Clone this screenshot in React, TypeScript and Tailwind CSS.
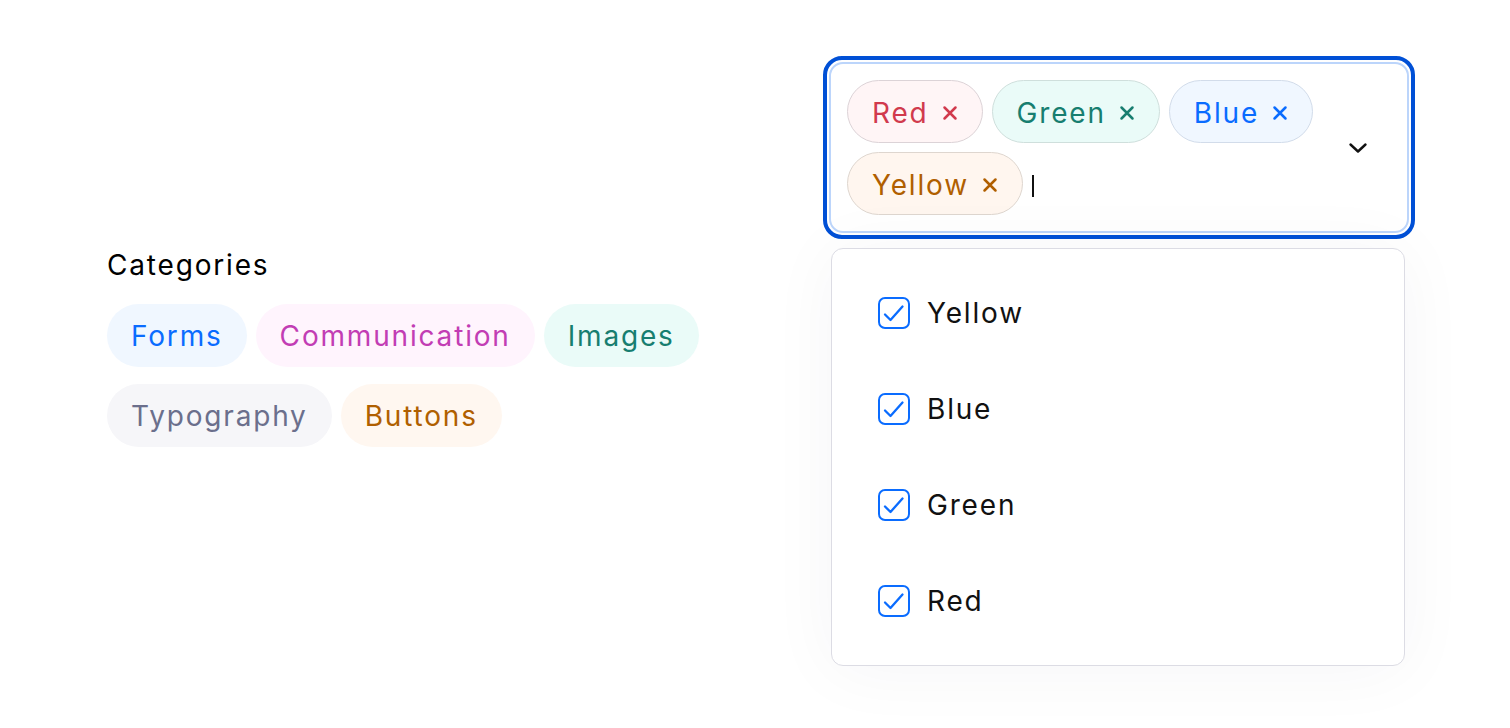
import React from "react";

const CATEGORIES: { label: string; cls: string }[] = [
  { label: "Forms", cls: "bg-[#f0f7ff] text-[#0a6cff]" },
  { label: "Communication", cls: "bg-[#fff4fd] text-[#c23db4]" },
  { label: "Images", cls: "bg-[#eafbf8] text-[#177e70]" },
  { label: "Typography", cls: "bg-[#f6f6f9] text-[#6b6f8c]" },
  { label: "Buttons", cls: "bg-[#fff7f0] text-[#b05f00]" },
];

const SELECTED: { label: string; cls: string }[] = [
  { label: "Red", cls: "bg-[#fff5f6] text-[#d13a4d] border-[#dcd3d7]" },
  { label: "Green", cls: "bg-[#eafbf8] text-[#177e70] border-[#cfdfdc]" },
  { label: "Blue", cls: "bg-[#f0f7ff] text-[#0a6cff] border-[#d2dcea]" },
  { label: "Yellow", cls: "bg-[#fff6ef] text-[#b05f00] border-[#ded6cf]" },
];

const OPTIONS = ["Yellow", "Blue", "Green", "Red"];

function XIcon() {
  return (
    <svg width="16" height="16" viewBox="0 0 16 16" fill="none" stroke="currentColor" strokeWidth="2.5" strokeLinecap="round" aria-hidden>
      <path d="M2.5 2.5l11 11M13.5 2.5l-11 11" />
    </svg>
  );
}

function Chevron() {
  return (
    <svg width="20" height="20" viewBox="0 0 20 20" fill="none" stroke="#111" strokeWidth="2.4" strokeLinecap="round" strokeLinejoin="round" aria-hidden>
      <path d="M2.5 6.5L10 13.5l7.5-7" />
    </svg>
  );
}

function Checkbox() {
  return (
    <span className="flex h-8 w-8 shrink-0 items-center justify-center rounded-[7px] border-2 border-[#0a6cff] bg-white">
      <svg width="28" height="28" viewBox="0 0 28 28" fill="none" stroke="#0a6cff" strokeWidth="2.3" strokeLinecap="round" strokeLinejoin="round" aria-hidden>
        <path d="M5 15.5l5.5 5.5L22.5 7.5" />
      </svg>
    </span>
  );
}

export default function App() {
  return (
    <div
      className="flex min-h-[728px] w-full items-start bg-white pl-[107px] pt-[56px] text-[28px] leading-[34px] tracking-[0.065em] text-[#111]"
      style={{ fontFamily: "Inter, 'Noto Sans', sans-serif" }}
    >
      {/* categories */}
      <div className="mt-[192px] w-[620px] shrink-0">
        <div className="mb-[22px] text-black">Categories</div>
        <div className="flex flex-wrap gap-x-[9px] gap-y-[17px]">
          {CATEGORIES.map((c) => (
            <span key={c.label} className={`flex h-[63px] items-center rounded-full px-6 pt-[1px] ${c.cls}`}>
              {c.label}
            </span>
          ))}
        </div>
      </div>

      {/* multi select */}
      <div className="ml-[96px] flex w-[592px] shrink-0 flex-col">
        <div className="rounded-[19px] border-4 border-[#0050d6] p-[2px]">
          <div className="flex items-center rounded-[14px] border-2 border-[#bcd5fb] bg-white py-4 pl-4">
            <div className="flex w-[484px] flex-wrap items-center gap-[9px]">
              {SELECTED.map((s) => (
                <span
                  key={s.label}
                  className={`flex h-[63px] items-center gap-[13px] rounded-full border pl-6 pr-[24px] pt-[3px] ${s.cls}`}
                >
                  {s.label}
                  <XIcon />
                </span>
              ))}
              <span className="mt-[4px] h-[22px] w-[2px] bg-[#111]" />
            </div>
            <div className="ml-[17px] flex w-5 items-center justify-center">
              <Chevron />
            </div>
          </div>
        </div>

        <div className="ml-[8px] mt-[9px] w-[574px] rounded-[12px] border border-[#dcdce4] bg-white py-4 shadow-[0_4px_70px_rgba(20,20,60,0.045)]">
          {OPTIONS.map((o) => (
            <div key={o} className="flex h-24 items-center gap-[17px] pl-[46px]">
              <Checkbox />
              <span>{o}</span>
            </div>
          ))}
        </div>
      </div>
    </div>
  );
}
